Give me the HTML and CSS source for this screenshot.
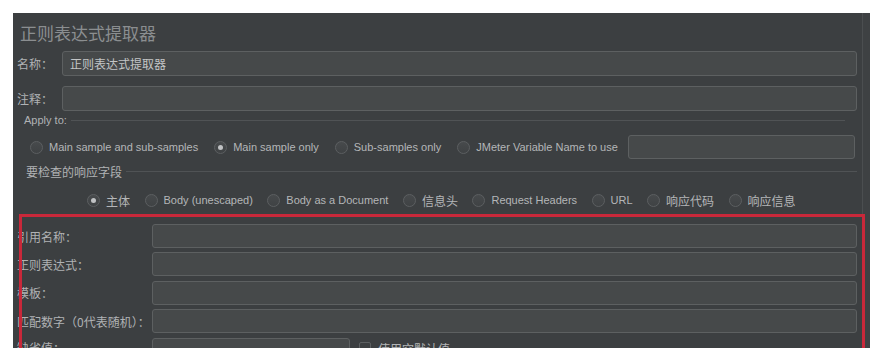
FILE: index.html
```html
<!DOCTYPE html>
<html lang="zh-CN">
<head>
  <meta charset="UTF-8">
  <title>正则表达式提取器</title>
  <link rel="stylesheet" href="styles.css">
</head>
<body>
  <div class="frame">
    <div class="panel">
      <h1 class="title">正则表达式提取器</h1>

      <!-- Name / comment -->
      <div class="row">
        <span class="label">名称：</span>
        <div class="field">正则表达式提取器</div>
      </div>
      <div class="row">
        <span class="label">注释：</span>
        <div class="field"></div>
      </div>

      <!-- Apply to -->
      <div class="group-title"><span>Apply to:</span></div>
      <div class="radios apply">
        <label class="radio"><span class="dot"></span>Main sample and sub-samples</label>
        <label class="radio"><span class="dot on"></span>Main sample only</label>
        <label class="radio"><span class="dot"></span>Sub-samples only</label>
        <label class="radio"><span class="dot"></span>JMeter Variable Name to use</label>
        <div class="field var-name"></div>
      </div>

      <!-- Field to check -->
      <div class="group-title cn"><span>要检查的响应字段</span></div>
      <div class="radios fields">
        <label class="radio cn"><span class="dot on"></span>主体</label>
        <label class="radio"><span class="dot"></span>Body (unescaped)</label>
        <label class="radio"><span class="dot"></span>Body as a Document</label>
        <label class="radio cn"><span class="dot"></span>信息头</label>
        <label class="radio"><span class="dot"></span>Request Headers</label>
        <label class="radio"><span class="dot"></span>URL</label>
        <label class="radio cn"><span class="dot"></span>响应代码</label>
        <label class="radio cn"><span class="dot"></span>响应信息</label>
      </div>

      <!-- Extractor settings -->
      <div class="settings">
        <div class="row tight">
          <span class="label wide">引用名称：</span>
          <div class="field"></div>
        </div>
        <div class="row tight">
          <span class="label wide">正则表达式：</span>
          <div class="field"></div>
        </div>
        <div class="row tight">
          <span class="label wide">模板：</span>
          <div class="field"></div>
        </div>
        <div class="row tight">
          <span class="label wide">匹配数字（0代表随机）：</span>
          <div class="field"></div>
        </div>
        <div class="row tight last">
          <span class="label wide">缺省值：</span>
          <div class="field short"></div>
          <label class="check"><span class="box"></span>使用空默认值</label>
        </div>
      </div>

      <div class="highlight"></div>
    </div>
  </div>
</body>
</html>
```

FILE: styles.css
```css
/* General */
body {
  margin: 0;
  background: #ffffff;
  font-family: "Liberation Sans", "Noto Sans CJK SC", sans-serif;
  font-size: 11px;
  color: #b4b6b8;
}

.frame {
  margin: 13px 0 0 13px;
  height: 335px;
  background: #3e4143;
  overflow: hidden;
}

.panel {
  position: relative;
  width: 850px;
  height: 335px;
  box-sizing: border-box;
  padding: 7px 5px 0 4px;
  background: #3c3f41;
  border-right: 1px solid #4b4e50;
}

.title {
  margin: 0 0 5px 3px;
  font-family: "Noto Sans CJK SC", sans-serif;
  font-size: 17px;
  font-weight: normal;
  line-height: 26px;
  color: #8b8e90;
}

/* Rows */
.row {
  display: flex;
  align-items: center;
  margin-bottom: 10px;
}

.label {
  width: 45px;
  flex: none;
  font-family: "Noto Sans CJK SC", sans-serif;
  font-size: 12px;
  color: #b0b2b4;
  white-space: nowrap;
}

.field {
  flex: 1;
  height: 25px;
  box-sizing: border-box;
  padding: 0 7px;
  background: #46494a;
  border: 1px solid #5d6061;
  border-radius: 3px;
  font-family: "Noto Sans CJK SC", sans-serif;
  font-size: 12px;
  line-height: 23px;
  color: #c3c5c6;
}

/* Group titles */
.group-title {
  display: flex;
  align-items: center;
  margin: -8px 12px 0 7px;
  height: 14px;
  font-size: 11px;
  color: #b0b2b4;
}

.group-title::after {
  content: "";
  flex: 1;
  height: 1px;
  margin-left: 4px;
  background: #505355;
}

.group-title.cn {
  margin: 4px 0 0 9px;
  height: 16px;
  font-family: "Noto Sans CJK SC", sans-serif;
  font-size: 12px;
}

/* Radios */
.radios {
  display: flex;
  align-items: center;
  white-space: nowrap;
}

.radios.apply {
  margin: 8px 2px 0 13px;
  height: 24px;
}

.radios.fields {
  margin: 11px 0 0 70px;
  height: 20px;
}

.radio {
  display: flex;
  align-items: center;
  margin-right: 16px;
  color: #b4b6b8;
}

.radios.fields .radio {
  margin-right: 14.5px;
}

.radio.cn {
  font-family: "Noto Sans CJK SC", sans-serif;
  font-size: 12px;
}

.dot {
  position: relative;
  width: 13px;
  height: 13px;
  margin-right: 6px;
  box-sizing: border-box;
  border: 1px solid #5c5f61;
  border-radius: 50%;
  background: linear-gradient(#474a4c, #3f4244);
}

.dot.on::after {
  content: "";
  position: absolute;
  left: 3px;
  top: 3px;
  width: 5px;
  height: 5px;
  border-radius: 50%;
  background: #c0c2c4;
}

.var-name {
  flex: 1;
  height: 24px;
  margin-left: -6px;
}

/* Extractor settings */
.settings {
  margin-top: 14px;
}

.row.tight {
  margin-bottom: 4.4px;
}

.row.tight .field {
  height: 24px;
}

.row.last {
  align-items: flex-start;
}

.row.last .label {
  padding-top: 1px;
}

.label.wide {
  width: 135px;
}

.field.short {
  flex: none;
  width: 198px;
}

.check {
  display: flex;
  align-items: center;
  margin-left: 9px;
  margin-top: 2px;
  font-family: "Noto Sans CJK SC", sans-serif;
  font-size: 12px;
  color: #b4b6b8;
}

.box {
  width: 12px;
  height: 12px;
  margin-right: 7px;
  box-sizing: border-box;
  border: 1px solid #5c5f61;
  border-radius: 2px;
}

/* Red annotation frame */
.highlight {
  position: absolute;
  left: 6px;
  top: 201px;
  width: 846px;
  height: 200px;
  box-sizing: border-box;
  border: 3px solid #c9283a;
}
```
